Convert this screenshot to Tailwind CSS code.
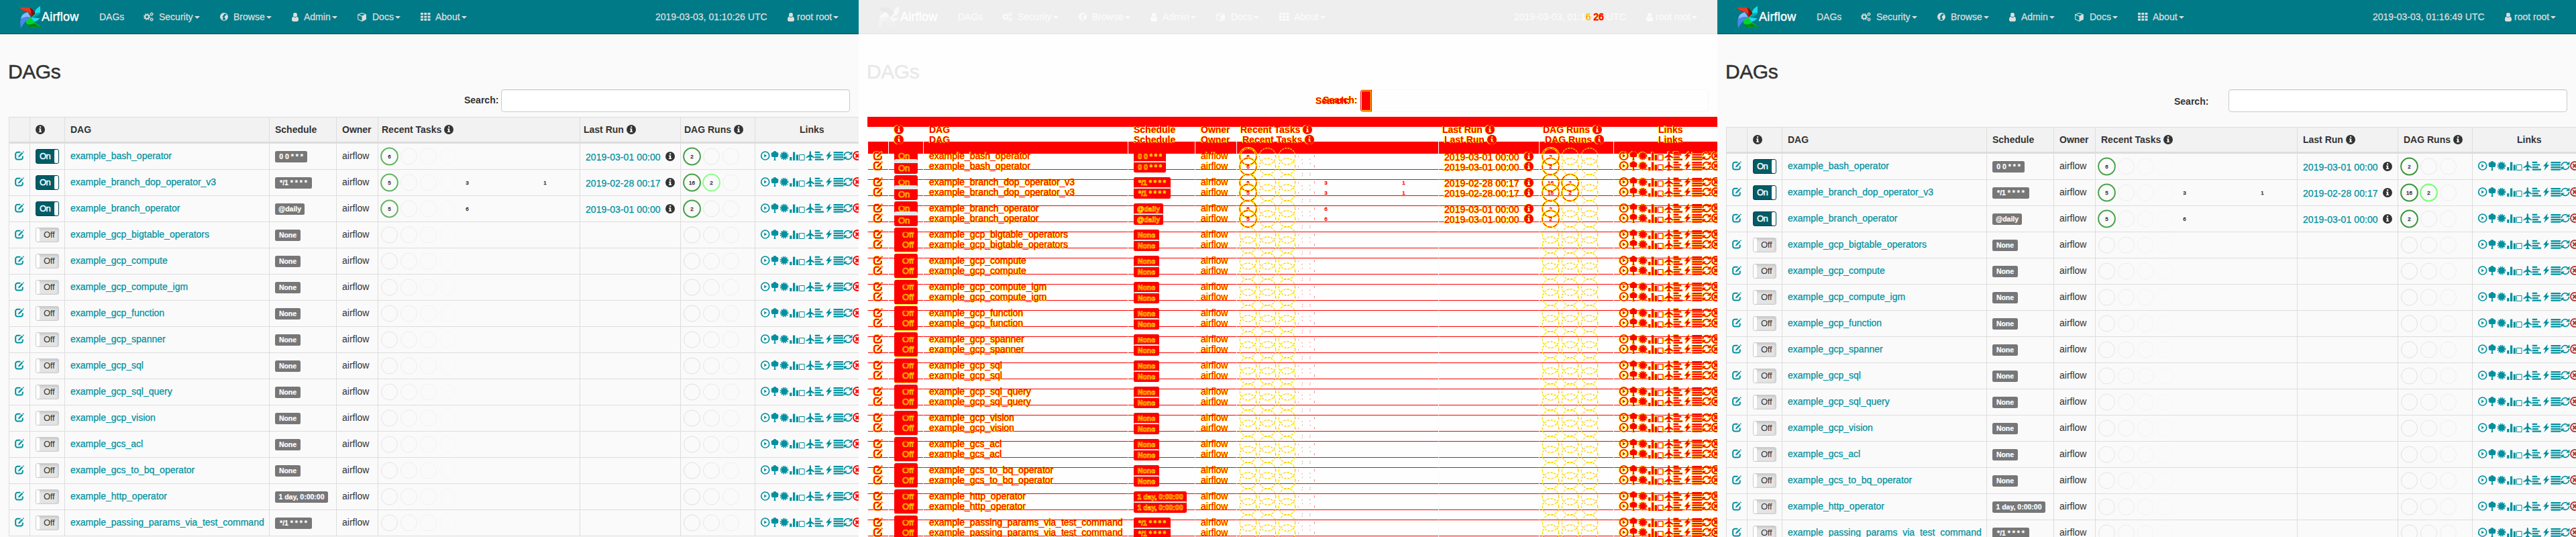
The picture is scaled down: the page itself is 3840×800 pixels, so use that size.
<!DOCTYPE html>
<html lang="en">
<head>
<meta charset="utf-8">
<title>Airflow - DAGs</title>
<script src="https://cdn.jsdelivr.net/npm/@tailwindcss/browser@4"></script>
</head>
<body class="bg-white">
<svg class="hidden">
  <symbol id="logo" viewBox="0 0 98 98">
    <path fill="#c11" d="M0 6 45 7Q66 18 70 36L52 50 44 30Q18 28 0 6Z"/><path fill="#7d1408" d="M45 7Q66 18 70 36L52 50Q58 26 45 7Z"/><path fill="#e43921" d="M0 6 45 7Q52 20 50 34L38 26Q16 24 0 6Z"/>
    <path fill="#11e1ee" d="M92 0V28Q88 44 52 50L70 34Q62 18 92 0Z"/><path fill="#0aa" d="M92 28Q88 44 52 50L74 32Z"/><path fill="#1fd8f5" d="M50 50 90 54Q82 66 64 70Z"/>
    <path fill="#00d42a" d="M50 50 28 58Q26 84 52 94L98 91Q66 80 50 50Z"/><path fill="#008a12" d="M66 76Q80 88 98 91L44 94Q36 88 32 80Q50 84 66 76Z"/>
    <path fill="#4a86e8" d="M6 98Q0 68 8 50L50 50Q26 62 6 98Z"/><path fill="#8ab8ff" d="M36 27Q10 34 6 56Q24 44 50 50Z"/>
  </symbol>
  <symbol id="mono" viewBox="0 0 98 98">
    <path fill="#e9e9e9" d="M0 6 45 7Q66 18 70 36L52 50 44 30Q18 28 0 6Z"/><path fill="#f8f8f8" d="M92 0V28Q88 44 52 50L70 34Q62 18 92 0Z"/><path fill="#f9f9f9" d="M50 50 90 54Q82 66 64 70Z"/>
    <path fill="#f0f0f0" d="M50 50 28 58Q26 84 52 94L98 91Q66 80 50 50Z"/><path fill="#f3f3f3" d="M6 98Q0 68 8 50L50 50Q26 62 6 98Z"/><path fill="#fafafa" d="M36 27Q10 34 6 56Q24 44 50 50Z"/>
  </symbol>
  <symbol id="info" viewBox="0 0 14 14"><path fill="currentColor" fill-rule="evenodd" d="M7 0a7 7 0 1 0 0 14A7 7 0 0 0 7 0ZM6 2.3h2.2v2H6Zm-1 3.3h3.2v4.2h1V11H4.9V9.8h1V6.8h-.9Z"/></symbol>
  <symbol id="edit" viewBox="0 0 14 14"><path fill="none" stroke="currentColor" stroke-width="2" d="M8.5 1.8H4A2.8 2.8 0 0 0 1.2 4.6v5.2A2.8 2.8 0 0 0 4 12.6h5a2.8 2.8 0 0 0 2.8-2.8V7.5"/><path fill="currentColor" d="m5 9.6.6-2.4 5.2-5.4 1.6 1.6-5.2 5.4Zm6.6-8.6 1-.8 1.4 1.4-.9 1Z"/></symbol>
  <symbol id="gears" viewBox="0 0 15 14"><g fill="none" stroke="currentColor"><circle cx="5" cy="7" r="2.9" stroke-width="1.9"/><circle cx="5" cy="7" r="4.4" stroke-width="1.3" stroke-dasharray="1.8 1.65"/><circle cx="12" cy="3" r="1.5" stroke-width="1.2"/><circle cx="12" cy="3" r="2.4" stroke-dasharray="1 .9"/><circle cx="12" cy="11" r="1.5" stroke-width="1.2"/><circle cx="12" cy="11" r="2.4" stroke-dasharray="1 .9"/></g></symbol>
  <symbol id="globe" viewBox="0 0 12 12"><circle cx="6" cy="6" r="5.4" fill="none" stroke="currentColor" stroke-width="1.1"/><path fill="currentColor" d="M1 3.5 3.5 1 7 .8 6.2 2.6 4.6 3.6 4.8 5 3 5.6 4.6 7 4.2 9.4 3 10 .8 7.5ZM7.6 4.4 9.5 3l2 2.5-.7 3L8.5 11 7.6 8 6.4 6.4Z"/></symbol>
  <symbol id="user" viewBox="0 0 10 13"><path fill="currentColor" d="M5 0a2.9 2.9 0 0 1 2.9 3A2.9 2.9 0 0 1 5 6.2 2.9 2.9 0 0 1 2.1 3 2.9 2.9 0 0 1 5 0ZM2.2 5.8a4 4 0 0 0 5.6 0C9.4 6.2 10 8 10 10.6 10 12 9 13 7.8 13H2.2C1 13 0 12 0 10.6 0 8 .6 6.2 2.2 5.8Z"/></symbol>
  <symbol id="cube" viewBox="0 0 13 13"><path fill="none" stroke="currentColor" stroke-width="1.1" stroke-linejoin="round" d="M6.5.6 12.3 2.8v7L6.5 12.4.7 9.8v-7Zm-5.8 2.2L6.5 5.2l5.8-2.4"/><path fill="currentColor" d="M6.5 5.2 12.3 2.8v7L6.5 12.4Z"/></symbol>
  <symbol id="grid" viewBox="0 0 15 12"><path fill="currentColor" d="M0 0h3.9v3H0Zm5.3 0h3.9v3H5.3Zm5.3 0h3.9v3h-3.9ZM0 4.4h3.9v3H0Zm5.3 0h3.9v3H5.3Zm5.3 0h3.9v3h-3.9ZM0 8.8h3.9v3H0Zm5.3 0h3.9v3H5.3Zm5.3 0h3.9v3h-3.9Z"/></symbol>
  <symbol id="links" viewBox="0 0 138 14"><g fill="currentColor">
    <circle cx="7.7" cy="7" r="6" fill="none" stroke="currentColor" stroke-width="1.7"/><path d="M6.2 4.6 10 7 6.2 9.4Z"/>
    <path d="M22 0a2.6 2.6 0 0 1 2.6 1.8A2.6 2.6 0 0 1 27 5.8 2.5 2.5 0 0 1 25 9H22.9v3.4l1 1.6h-3.8l1-1.6V9H19a2.5 2.5 0 0 1-2-3.2 2.6 2.6 0 0 1 2.4-4A2.6 2.6 0 0 1 22 0Z"/>
    <circle cx="36" cy="7" r="4.8"/><circle cx="36" cy="7" r="5.5" fill="none" stroke="currentColor" stroke-width="1.8" stroke-dasharray="1.55 1.33"/>
    <path d="M44.2 9h3.2v5h-3.2Zm4.8-7.5h3.2V14H49Zm4.8 4H57V14h-3.2Z"/><path fill="none" stroke="currentColor" d="M58.5 5.5h7.6v8h-7.6Z"/>
    <path d="M74.8 0c.8 0 1.2 1.2 1.2 2.4v2.8l5.2 4v1.4L76 8.8l-.2 2.8 1.8 1.4v.9h-5.6V13l1.8-1.4-.2-2.8-5.2 1.8V9.2l5.2-4V2.4c0-1.2.4-2.4 1.2-2.4Z"/>
    <path d="M81.8.8h7.4v2.2h-7.4Zm0 3.6h11.4v2.2H81.8Zm0 3.6h9v2.2h-9Zm0 3.6H95v2.2H81.8Z"/>
    <path d="M104.8 0 98 7.8h3.4L99.4 14 107.4 5.6h-3.8Z"/>
    <path d="M109.5 1H124v2.2h-14.5Zm0 3.6H124v2.2h-14.5Zm0 3.5H124v2.2h-14.5Zm0 3.5H124v2.2h-14.5Z"/></g>
    <path fill="none" stroke="currentColor" stroke-width="1.7" d="M125.4 7A5.6 5.6 0 0 1 135 3.3M136.6 7A5.6 5.6 0 0 1 127 10.7"/><path fill="currentColor" d="M137.4.4V5.6H132ZM124.6 13.6V8.4H130Z"/>
  </symbol>
  <symbol id="del" viewBox="0 0 14 14"><circle cx="7" cy="7" r="6" fill="none" stroke="currentColor" stroke-width="1.8"/><path stroke="currentColor" stroke-width="2.2" d="m4.4 4.4 5.2 5.2m0-5.2L4.4 9.6"/></symbol>
</svg>
<main id="app" class="flex h-[800px] w-[3840px] overflow-hidden font-['Liberation_Sans',Arial,sans-serif] text-[14px] leading-5 text-[#333]"></main>
<script>
const OUT = "[filter:drop-shadow(.7px_0_0_#ff0)_drop-shadow(-.7px_0_0_#ff0)_drop-shadow(0_.7px_0_#ff0)]";
const T = {
  before: {kind:"live", time:"2019-03-03, 01:10:26 UTC", del:"text-[#f00]", task:"#60b460", run:"#45a045", going:"#8cff8c"},
  after:  {kind:"live", time:"2019-03-03, 01:16:49 UTC", del:"text-[#b33a34]", task:"#48a348", run:"#389538", going:"#70ff70"},
  diffA:  {kind:"diff", top:true},
  diffB:  {kind:"diff", top:false},
};
const rows = [
  ["example_bash_operator","0 0 * * *",48,{0:6},[2],"2019-03-01 00:00"],
  ["example_branch_dop_operator_v3","*/1 * * * *",55,{0:5,4:3,8:1},[16,2],"2019-02-28 00:17"],
  ["example_branch_operator","@daily",44,{0:5,4:6},[2],"2019-03-01 00:00"],
  ["example_gcp_bigtable_operators","None",38],["example_gcp_compute","None",38],["example_gcp_compute_igm","None",38],
  ["example_gcp_function","None",38],["example_gcp_spanner","None",38],["example_gcp_sql","None",38],["example_gcp_sql_query","None",38],
  ["example_gcp_vision","None",38],["example_gcs_acl","None",38],["example_gcs_to_bq_operator","None",38],
  ["example_http_operator","1 day, 0:00:00",79],["example_passing_params_via_test_command","*/1 * * * *",55],
];
const use = (id, cls) => `<svg class="shrink-0 ${cls}"><use href="#${id}"/></svg>`;
const caret = `<svg class="ml-[2px] mt-[2px] h-[4px] w-[8px] shrink-0" viewBox="0 0 8 4"><path fill="currentColor" d="M0 0h8L4 4Z"/></svg>`;

function nav(diff, time) {
  const item = (w, icon, iw, label) => `<div class="flex shrink-0 items-center ${w}"><div class="flex shrink-0 items-center ${iw}">${icon}</div>${label}${caret}</div>`;
  const hot = s => `<span class="text-[#f00] [-webkit-text-stroke:.6px_#ff0]">${s}</span>`;
  const clock = diff ? `2019-03-03, 01:1${hot("6")}:<span class="text-[#f00] [-webkit-text-stroke:.8px_#f00] [text-shadow:1px_0_#ff0,-1px_0_#ff0]">26</span> UTC` : time;
  return `<header class="flex h-[51px] items-center border-b pl-[29px] [-webkit-text-stroke:.25px] ${diff ? "border-[#e6e6e6] bg-[#eee] text-[#fbfbfb]" : "border-[#004e57] bg-[#007a87] text-[#dedede]"}">
    ${use(diff ? "mono" : "logo", "h-[33px] w-[33px]")}
    <div class="w-[86px] shrink-0 text-[18px] tracking-[.2px] text-white [-webkit-text-stroke:.4px]">Airflow</div>
    <div class="w-[66px] shrink-0">DAGs</div>
    ${item("w-[114px]", use("gears","h-[14px] w-[15px]"), "w-[23px]", "Security")}
    ${item("w-[107px]", use("globe","h-[12px] w-[12px]"), "w-[20px]", "Browse")}
    ${item("w-[98px]", use("user","h-[13px] w-[10px]"), "w-[18px]", "Admin")}
    ${item("w-[94px]", use("cube","h-[13px] w-[13px]"), "w-[22px]", "Docs")}
    ${item("w-[350px]", use("grid","h-[12px] w-[15px]"), "w-[22px]", "About")}
    <div class="w-[197px] shrink-0 whitespace-nowrap">${clock}</div>
    ${item("w-[100px]", use("user","h-[13px] w-[10px]"), "w-[14px]", "root root")}
  </header>
  <h1 class="mt-[36px] h-[40px] pl-[12px] text-[30px] leading-[40px] tracking-[-.4px] [-webkit-text-stroke:.5px] ${diff ? "text-[#e9e9e9]" : "text-[#333]"}">DAGs</h1>`;
}

const widths = ["w-[31px]","w-[52px]","w-[305px]","w-[100px]","w-[62px]","w-[301px]","w-[150px]","w-[111px]","w-[165px]"];

function table(t, shift) {
  const d = t.kind === "diff", o = d ? OUT : "";
  const info = use("info", "h-[14px] w-[14px]");
  const edge = d ? (t.top ? "border-transparent" : "border-white") : "border-[#ddd]";
  const hp = shift ? "pl-[8px]" : "pl-[5px]";
  const heads = [["",""],[info,"pl-[8px]"],["DAG","pl-[8px]"],["Schedule","pl-[8px]"],["Owner","pl-[8px]"],
    ["Recent Tasks "+info,hp],["Last Run "+info,hp],["DAG Runs "+info,hp],["Links","pl-[66px]"]];
  const head = `<div class="flex h-[40px] ${d ? "" : "border-t border-b-[3px] border-[#ddd] bg-[#f2f2f2]"}">` +
    heads.map(([h,p],i) => `<div class="flex shrink-0 items-center border-l font-bold ${d ? "pb-[2px]" : ""} ${widths[i]} ${edge} ${p}"><div class="flex items-center gap-1 whitespace-nowrap ${d ? "text-[#f00] "+OUT : ""}">${h}</div></div>`).join("") + `</div>`;

  const ring = (x, col, w, n, op, dash) => `<g>${col ? `<circle cx="${x}" cy="19" r="${w>1?12.4:12}" fill="none" stroke="${col}" stroke-width="${w}" opacity="${op}" ${dash ? `stroke-dasharray="${dash}"` : ''}/>` : ""}${n ? `<text x="${x}" y="22" text-anchor="middle" font-size="8" ${d ? 'fill="#f00" stroke="#f00" stroke-width=".4"' : 'fill="#222" stroke="#222" stroke-width=".3"'}>${n}</text>` : ""}</g>`;
  const strong = (x, col, n) => d ? ring(x,"#ff0",3,0,1) + ring(x,"#f00",1.1,n,1,"7 1.5") : ring(x,col,2,n,1);
  const weak = x => ring(x,"#ff0",1.2,0,1,"3 1.2") + ring(x,"#f00",.8,0,1,"1 4.2");
  const tasks = m => {
    let s = "";
    for (let i = 0; i < 9; i++) {
      const x = 16.5 + i*29, n = m && m[i];
      if (i === 0 && n) s += strong(x, t.task, n);
      else if (i < 4) s += d ? (i < 3 ? weak(x) : ring(x,"#f00",.8,0,1,"1.2 11")) : ring(x,"#000",1,0,[.09,.055,.035,.02][i]);
      else if (n) s += ring(x,"",0,n,1);
    }
    return `<svg class="h-[38px] w-[290px]">${s}</svg>`;
  };
  const runs = r => {
    let s = "";
    for (let i = 0; i < 3; i++) {
      const x = 16.5 + i*29, n = r && r[i];
      s += n ? strong(x, i ? t.going : t.run, n) : d ? weak(x) : ring(x,"#000",1,0,[.11,.08,.05][i]);
    }
    return `<svg class="h-[38px] w-[105px]">${s}</svg>`;
  };
  const toggle = on => d
    ? `<div class="flex h-[22px] w-[35px] items-center rounded-[3px] text-[13px] ${on ? (t.top ? "bg-[#f00] pl-[6px]" : "border-t-[6px] border-[#e8e8e8] bg-[#f00] pl-[6px]") : (t.top ? "bg-[#f00] pl-[12px]" : "border-b border-[#ff0] bg-[#f00] pl-[12px]")}"><span class="text-[#f00] [-webkit-text-stroke:.6px_#ff0]">${on ? "On" : "Off"}</span></div>`
    : on
    ? `<div class="flex h-[22px] w-[35px] items-center justify-between rounded-[3px] border border-[#00454d] bg-[#005c66] pl-[5px] text-[13px] text-white"><span class="tracking-[-.7px] [-webkit-text-stroke:.4px]">On</span><span class="h-[20px] w-[6px] rounded-[2px] bg-white"></span></div>`
    : `<div class="flex h-[22px] w-[35px] items-center rounded-[3px] border border-[#ccc] bg-[#e4e4e4] text-[13px] shadow-[inset_0_2px_4px_#00000026]"><span class="mr-[6px] h-[20px] w-[5px] rounded-[2px] bg-white"></span><span class="tracking-[-.3px]">Off</span></div>`;
  const link = d ? "text-[#f00]" : "text-[#0091a0]";
  const badge = (s, w) => `<div class="mt-[1px] flex h-[17px] items-center justify-center whitespace-pre rounded-[2.5px] text-[10.5px] leading-none font-bold ${d ? (t.top ? "bg-[#f00] text-[#f00] [-webkit-text-stroke:.6px_#ff0]" : "border-t-2 border-[#eee] bg-[#f00] text-[#f00] [-webkit-text-stroke:.6px_#ff0]") : "bg-[#777] text-white [-webkit-text-stroke:.2px]"}" style="width:${w}px">${s}</div>`;
  const line = d ? "border-b-[#f00] border-l-[#fafafa]" : "border-[#ddd]";
  const body = rows.map(([name,sch,w,m,r,last], k) => {
    const c = [
      ["pl-[8px] pb-[3px]", `<div class="${link} ${o}">${use("edit","h-[14px] w-[14px]")}</div>`],
      ["pl-[8px]", toggle(k < 3)],
      ["pl-[8px] pb-[2px]", `<a class="${link} ${o} whitespace-nowrap [-webkit-text-stroke:.25px]">${name}</a>`],
      ["pl-[8px]", badge(sch, w)],
      ["pl-[8px] pb-[2px]", `<span class="${d ? "text-[#f00] "+OUT : ""}">airflow</span>`],
      ["", tasks(m)],
      ["pl-[8px]", last ? `<div class="flex items-center ${link} ${o}"><span class="mt-[2px] w-[119px] whitespace-nowrap tracking-[.07px] [-webkit-text-stroke:.25px]">${last}</span><span class="${d ? "" : "text-[#333]"}">${info}</span></div>` : ""],
      ["", runs(r)],
      ["pl-[7px] pb-[3px]", `<div class="flex shrink-0 items-center ${link} ${o}">${use("links","h-[14px] w-[138px]")}<span class="${d ? "" : t.del}">${use("del","h-[14px] w-[14px]")}</span></div>`],
    ];
    return `<div class="flex h-[39px]">` + c.map(([p,h],i) => `<div class="flex shrink-0 items-center border-b border-l ${line} ${widths[i]} ${p}">${h}</div>`).join("") + `</div>`;
  }).join("");
  return `<div class="ml-[13px]">${head}${body}</div>`;
}

const live = (t, after) => `<section class="h-[800px] w-[1280px] shrink-0 overflow-hidden bg-[#fafafa]">${nav(false, t.time)}
  <div class="flex items-center pt-[6px] ${after ? "h-[62px] pb-[22px] pl-[681px]" : "h-[47px] pb-[7px] pl-[692px]"}">
    <label class="shrink-0 font-bold ${after ? "mt-[1px] w-[81px]" : "mb-[2px] w-[55px]"}">Search:</label>
    <div class="h-[34px] shrink-0 rounded-[4px] border border-[#ccc] bg-white shadow-[inset_0_1px_1px_#00000013] ${after ? "w-[505px]" : "w-[520px]"}"></div>
  </div>${table(t, after)}</section>`;

const diff = `<section class="relative h-[800px] w-[1280px] shrink-0 overflow-hidden bg-[#fefefe]">${nav(true)}
  <div class="flex h-[47px] items-center pl-[681px] pt-[6px] pb-[7px]">
    <div class="relative w-[66px] shrink-0 font-bold text-[#f00] ${OUT}">Search:<span class="absolute left-[11px] top-[-1px]">Search:</span></div>
    <div class="h-[34px] w-[520px] shrink-0 overflow-hidden rounded-[4px] border border-[#f6f6f6]"><div class="h-full w-[17px] rounded-l-[3px] bg-[#f00] outline outline-[#ff0] outline-offset-[-2px]"></div></div>
  </div>
  <div class="ml-[13px] h-[15px] bg-[#f00]"></div>
  <div class="ml-[13px] mt-[22px] h-[18px] bg-[#f00]"></div>
  <div class="absolute left-0 top-[174px]">${table(T.diffA, false)}</div>
  <div class="absolute left-0 top-[189px]">${table(T.diffB, true)}</div>
</section>`;

document.getElementById("app").innerHTML = live(T.before, false) + diff + live(T.after, true);
</script>
</body>
</html>
